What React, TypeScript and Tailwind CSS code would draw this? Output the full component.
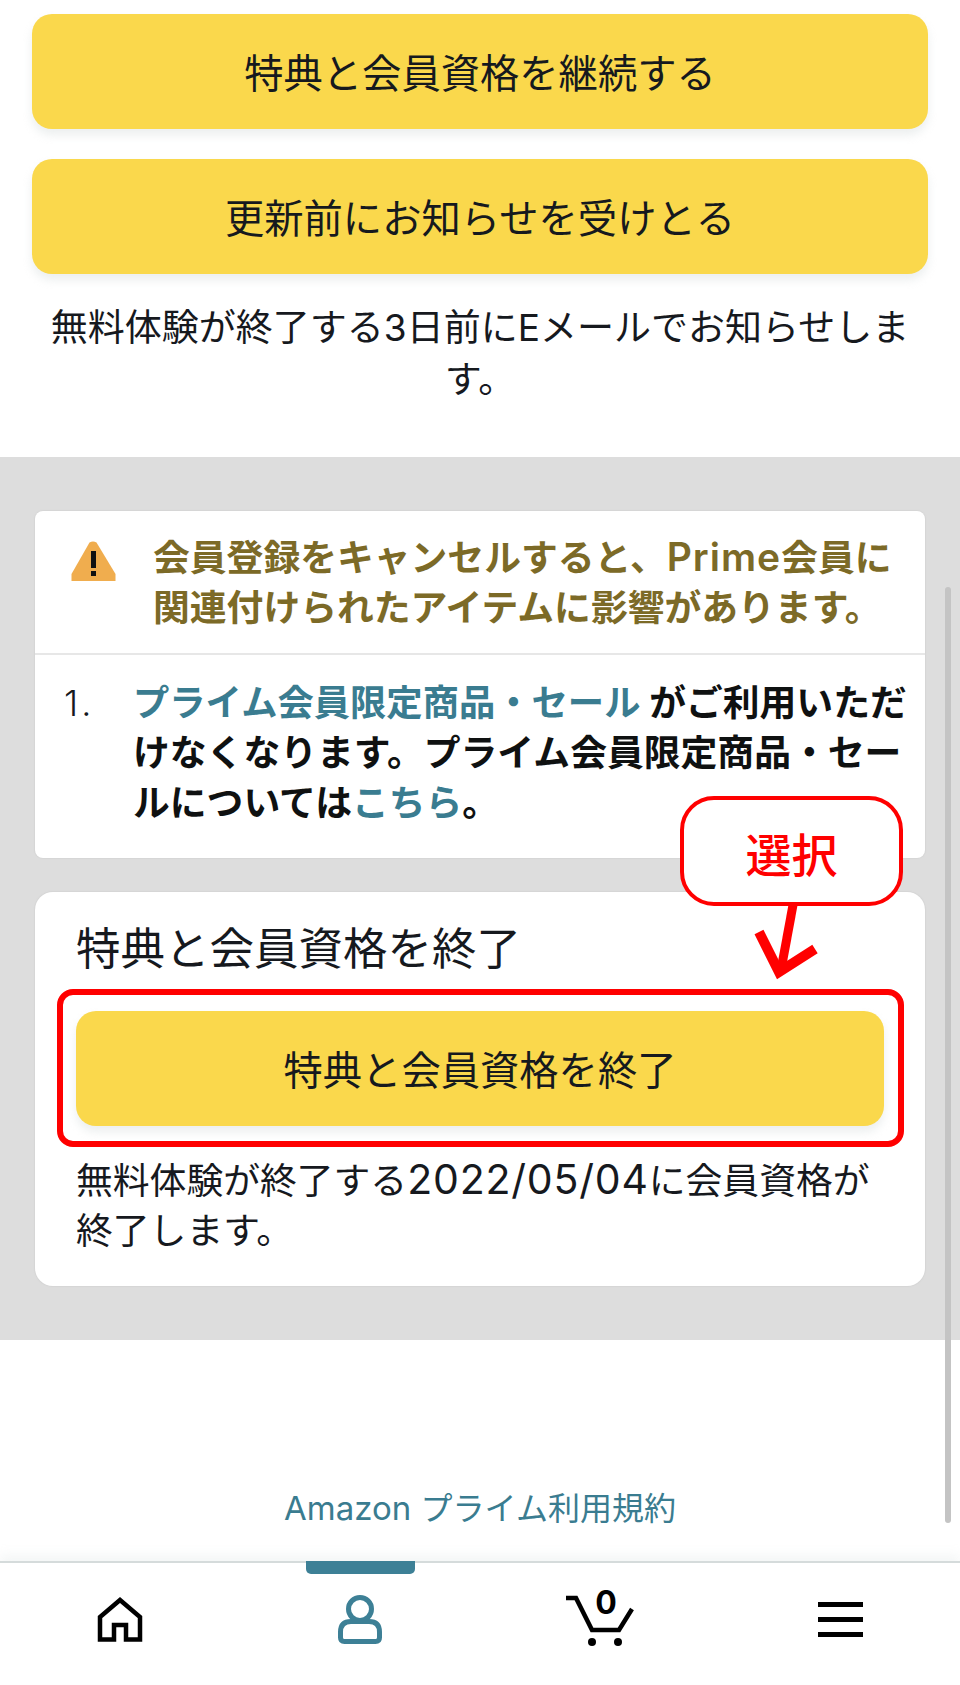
const font = "font-['Inter','Noto_Sans_CJK_JP',sans-serif]";

function YellowButton({ label }: { label: string }) {
  return (
    <button
      type="button"
      className="flex h-[115px] w-full items-center justify-center rounded-[20px] bg-[#fad84c] pt-[5px] text-[39.3px] text-[#16191e] shadow-[0_6px_10px_rgba(213,219,219,0.45)]"
    >
      {label}
    </button>
  );
}

function WarningIcon() {
  return (
    <svg width="45" height="40" viewBox="0 0 45 40" className="mt-[8px] shrink-0">
      <path d="M18.5 1.5 Q22 -0.5 25.5 1.5 L44.5 33 V40 H0.5 V33 Z" fill="#f0ad4e" />
      <rect x="20" y="10" width="5" height="17" fill="#111" />
      <rect x="20" y="30" width="5" height="5" fill="#111" />
    </svg>
  );
}

function HomeIcon() {
  return (
    <svg width="46" height="46" viewBox="0 0 46 46" fill="none" stroke="#000" strokeWidth="4.5">
      <path d="M3 43.5 V21 L23 4 L43 21 V43.5 H29 V29 H17 V43.5 Z" strokeLinejoin="miter" />
    </svg>
  );
}

function PersonIcon() {
  return (
    <svg width="46" height="50" viewBox="0 0 46 50" fill="none" stroke="#3d8096" strokeWidth="5">
      <path d="M14 27.5 H32 Q42.5 27.5 42.5 38 V43.5 Q42.5 47.5 38.5 47.5 H7.5 Q3.5 47.5 3.5 43.5 V38 Q3.5 27.5 14 27.5 Z" />
      <circle cx="23" cy="15" r="11.5" fill="#fff" />
    </svg>
  );
}

function CartIcon() {
  return (
    <div className="relative h-[56px] w-[70px]">
      <svg width="70" height="56" viewBox="0 0 70 56" fill="none" stroke="#000" strokeWidth="4.5">
        <path d="M1 7 H11 L27 39 H54 L67 18" />
        <circle cx="27" cy="51" r="4" fill="#000" stroke="none" />
        <circle cx="53" cy="51" r="4" fill="#000" stroke="none" />
      </svg>
      <span className="absolute top-[-4px] left-[29px] w-[24px] text-center text-[32px] leading-[32px] font-bold text-black">0</span>
    </div>
  );
}

function MenuIcon() {
  return (
    <div className="flex w-[45px] flex-col gap-[10px]">
      <div className="h-[5px] bg-black" />
      <div className="h-[5px] bg-black" />
      <div className="h-[5px] bg-black" />
    </div>
  );
}

export default function App() {
  return (
    <div className={`relative flex h-[1685px] w-[960px] flex-col overflow-hidden bg-white ${font}`}>
      <section className="px-[32px] pt-[14px] pb-[51px]">
        <YellowButton label="特典と会員資格を継続する" />
        <div className="mt-[30px]">
          <YellowButton label="更新前にお知らせを受けとる" />
        </div>
        <p className="mx-auto mt-[28px] w-[870px] text-center text-[37px] leading-[52px] text-[#16191e]">
          無料体験が終了する3日前にEメールでお知らせします。
        </p>
      </section>

      <section className="flex flex-col gap-[34px] bg-[#dddddd] px-[35px] py-[54px]">
        <div className="rounded-[8px] bg-white shadow-[0_0_1px_1px_#d5d5d5]">
          <div className="flex gap-[37px] border-b-2 border-[#e7e7e7] pt-[22px] pr-[20px] pb-[20px] pl-[36px]">
            <WarningIcon />
            <p className="text-[36.8px] leading-[50px] font-bold text-[#7c6a27]">
              会員登録をキャンセルすると、<span className="text-[39px] leading-none font-semibold tracking-[1px]">Prime</span>会員に関連付けられたアイテムに影響があります。
            </p>
          </div>
          <div className="flex pt-[23px] pr-[14px] pb-[30px] pl-[29px]">
            <span className="w-[69px] shrink-0 text-[36px] leading-[50px] font-light tracking-[3px] text-[#16191e]">1.</span>
            <p className="text-[36.8px] leading-[50px] font-bold text-[#0f1111]">
              <span className="text-[36.3px] text-[#3a7c90]">プライム会員限定商品・セール</span>{" "}
              がご利用いただけなくなります。プライム会員限定商品・セールについては
              <span className="text-[#3a7c90]">こちら</span>。
            </p>
          </div>
        </div>

        <div className="rounded-[18px] bg-white px-[41px] pt-[26px] pb-[30px] shadow-[0_0_1px_1px_#d5d5d5]">
          <h2 className="text-[44.5px] leading-[62px] font-normal text-[#16191e]">特典と会員資格を終了</h2>
          <div className="relative mt-[31px]">
            <YellowButton label="特典と会員資格を終了" />
            <div className="absolute -top-[22px] -right-[20px] -bottom-[21px] -left-[19px] rounded-[16px] border-[6px] border-[#ff0000]" />
          </div>
          <p className="mt-[30px] text-[36.8px] leading-[50px] text-[#16191e]">
            無料体験が終了する<span className="text-[41px] leading-none tracking-[0.8px]">2022/05/04</span>に会員資格が終了します。
          </p>
        </div>
      </section>

      <div className="flex flex-1 flex-col items-center justify-end pb-[29px]">
        <a className="text-[33px] leading-[46px] text-[#3a7c90]">
          Amazon <span className="text-[32px]">プライム利用規約</span>
        </a>
      </div>

      <nav className="relative grid h-[124px] grid-cols-4 items-center border-t-2 border-[#d5dbdb] bg-white pb-[10px] shadow-[0_-6px_10px_rgba(213,219,219,0.25)]">
        <div className="flex justify-center"><HomeIcon /></div>
        <div className="flex justify-center">
          <div className="absolute top-[-2px] h-[13px] w-[109px] rounded-b-[5px] bg-[#3d8096]" />
          <PersonIcon />
        </div>
        <div className="flex justify-center"><CartIcon /></div>
        <div className="flex justify-center"><MenuIcon /></div>
      </nav>

      {/* annotation over the page */}
      <div className="absolute top-[796px] left-[680px] flex h-[110px] w-[223px] items-center justify-center rounded-[34px] border-[4px] border-[#ff0000] bg-white pt-[8px] text-[46px] font-medium text-[#ff0000]">
        選択
      </div>
      <svg width="80" height="80" viewBox="0 0 80 80" fill="none" stroke="#ff0000" className="absolute top-[904px] left-[748px]">
        <path d="M45 1 L33 66" strokeWidth="9" />
        <path d="M11 28 L31 68 L67 45" strokeWidth="10" />
      </svg>

      {/* scrollbar */}
      <div className="absolute top-[587px] left-[945px] h-[936px] w-[6px] rounded-full bg-[#c4c4c4]" />
    </div>
  );
}
